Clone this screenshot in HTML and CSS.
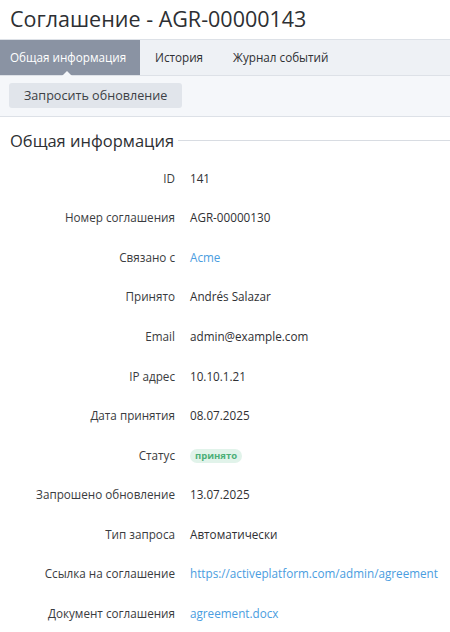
FILE: index.html
```html
<!DOCTYPE html>
<html lang="ru">
<head>
<meta charset="utf-8">
<link rel="stylesheet" href="styles.css">
</head>
<body>
<h1 class="title">Соглашение - AGR-00000143</h1>
<nav class="tabs">
  <div class="tab active">Общая информация</div>
  <div class="tab">История</div>
  <div class="tab">Журнал событий</div>
</nav>
<div class="toolbar">
  <button class="btn">Запросить обновление</button>
</div>
<section class="section">
  <div class="section-head"><span>Общая информация</span><i class="rule"></i></div>
  <dl class="props">
    <div class="row"><dt>ID</dt><dd>141</dd></div>
    <div class="row"><dt>Номер соглашения</dt><dd>AGR-00000130</dd></div>
    <div class="row"><dt>Связано с</dt><dd><a class="link">Acme</a></dd></div>
    <div class="row"><dt>Принято</dt><dd>Andrés Salazar</dd></div>
    <div class="row"><dt>Email</dt><dd>admin@example.com</dd></div>
    <div class="row"><dt>IP адрес</dt><dd>10.10.1.21</dd></div>
    <div class="row"><dt>Дата принятия</dt><dd>08.07.2025</dd></div>
    <div class="row"><dt>Статус</dt><dd><span class="badge">принято</span></dd></div>
    <div class="row"><dt>Запрошено обновление</dt><dd>13.07.2025</dd></div>
    <div class="row"><dt>Тип запроса</dt><dd>Автоматически</dd></div>
    <div class="row"><dt>Ссылка на соглашение</dt><dd><a class="link">https://activeplatform.com/admin/agreement</a></dd></div>
    <div class="row"><dt>Документ соглашения</dt><dd><a class="link">agreement.docx</a></dd></div>
  </dl>
</section>
</body>
</html>
```
FILE: styles.css
```css
* { box-sizing: border-box; }
html, body { margin: 0; padding: 0; background: #fff; }
body {
  font-family: "Open Sans", "Noto Sans", sans-serif;
  color: #2f3033;
  font-size: 11.7px;
  width: 450px;
  overflow: hidden;
}
.title {
  margin: 0;
  padding: 4px 10px 0;
  height: 39px;
  font-size: 21.5px;
  font-weight: 400;
  line-height: 30px;
  color: #2d2f33;
}
.tabs {
  display: flex;
  height: 37px;
  background: #eef1f5;
  border-top: 1px solid #dde1e7;
  border-bottom: 1px solid #dde1e7;
}
.tab {
  position: relative;
  padding: 0 15px;
  line-height: 35px;
  font-size: 11.7px;
  white-space: nowrap;
  color: #2f3033;
}
.tab.active {
  background: #8a93a3;
  color: #fff;
  padding: 0 10px;
  width: 140px;
}
.tab.active::after {
  content: "";
  position: absolute;
  left: 62px;
  bottom: -1px;
  border-left: 5px solid transparent;
  border-right: 5px solid transparent;
  border-bottom: 5px solid #f5f7fa;
}
.toolbar {
  background: #f5f7fa;
  border-bottom: 1px solid #dde1e7;
  padding: 7px 9px 0;
  height: 41px;
}
.btn {
  font-family: inherit;
  font-size: 12.6px;
  color: #3c3f45;
  background: #e1e5eb;
  border: 0;
  border-radius: 3px;
  height: 25px;
  padding: 0 15px;
  line-height: 25px;
}
.section { padding: 0 0 0 10px; }
.section-head {
  display: flex;
  align-items: center;
  gap: 4px;
  margin-top: 10px;
  height: 26px;
  font-size: 16.5px;
  color: #2d2f33;
}
.section-head .rule {
  flex: 1;
  height: 1px;
  background: #d8dce2;
  margin-top: 1px;
}
.props { margin: 5px 0 0; }
.row {
  display: flex;
  align-items: center;
  height: 39.55px;
}
.row dt {
  width: 165px;
  text-align: right;
  color: #3a3c40;
}
.row dd {
  margin: 0 0 0 15px;
  white-space: nowrap;
}
.link { color: #4a9de0; text-decoration: none; }
.badge {
  display: inline-block;
  background: #e1f3ea;
  color: #4caf78;
  font-weight: 700;
  font-size: 9.5px;
  line-height: 14px;
  padding: 0 5px;
  border-radius: 7px;
}
```
